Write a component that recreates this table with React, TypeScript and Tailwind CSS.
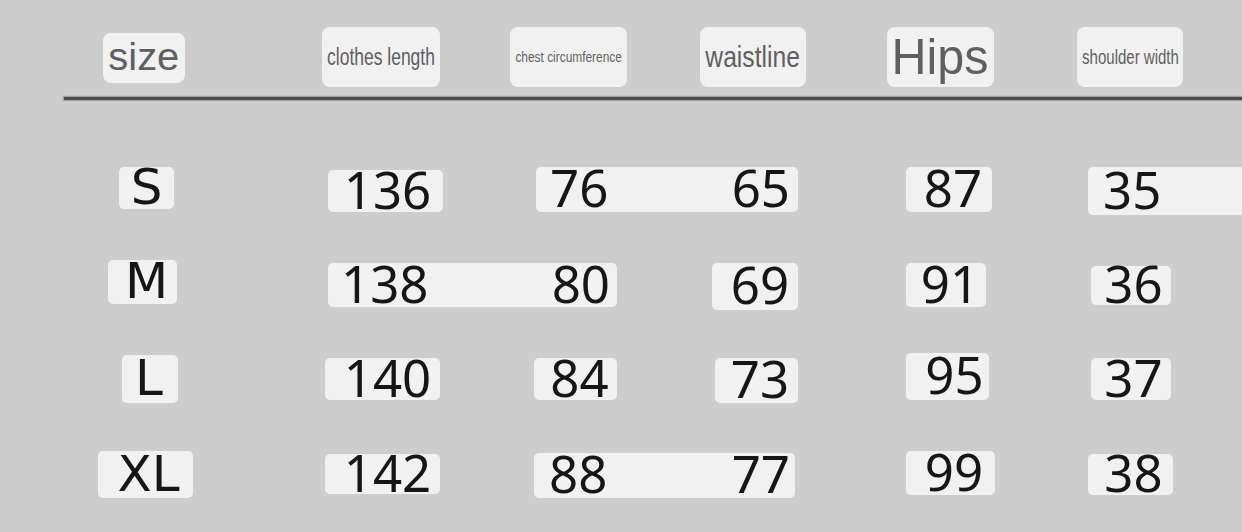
import clsx from "clsx";
import type { ReactNode } from "react";

type CellProps = {
  className?: string;
  children: ReactNode;
};

function Cell({ className, children }: CellProps) {
  return (
    <div
      className={clsx(
        "flex shrink-0 items-center rounded-[5px] bg-[#f1f1f1]",
        className,
      )}
    >
      {children}
    </div>
  );
}

function Num({ children }: { children: ReactNode }) {
  return (
    <span className="pb-[4px] font-['Noto_Sans',sans-serif] text-[51px] leading-none text-[#161616]">
      {children}
    </span>
  );
}

function Size({ children }: { children: ReactNode }) {
  return (
    <span className="pb-[2px] font-['DejaVu_Sans',sans-serif] text-[50px] leading-none text-[#161616]">
      {children}
    </span>
  );
}

const head =
  "flex h-[60px] shrink-0 items-center justify-center rounded-[8px] bg-[#f1f1f1]";
const headText =
  "whitespace-nowrap font-['Liberation_Sans',Arial,sans-serif] leading-none text-[#5f5f5f]";

export default function App() {
  return (
    <div className="flex h-[532px] w-[1242px] flex-col overflow-hidden bg-[#cdcdcd]">
      {/* column titles */}
      <div className="flex h-[97px] shrink-0 items-start pt-[27px]">
        <div className="ml-[103px] mt-[6px] flex h-[50px] w-[82px] shrink-0 items-center justify-center rounded-[8px] bg-[#f1f1f1]">
          <span className={clsx(headText, "scale-x-[1.05] pb-[2px] text-[38px]")}>size</span>
        </div>
        <div className={clsx(head, "ml-[137px] w-[118px]")}>
          <span className={clsx(headText, "scale-x-[0.76] text-[23px]")}>
            clothes length
          </span>
        </div>
        <div className={clsx(head, "ml-[70px] w-[117px]")}>
          <span className={clsx(headText, "scale-x-[0.85] text-[14px]")}>
            chest circumference
          </span>
        </div>
        <div className={clsx(head, "ml-[73px] w-[106px]")}>
          <span className={clsx(headText, "scale-x-[0.85] text-[29px]")}>
            waistline
          </span>
        </div>
        <div className={clsx(head, "ml-[81px] w-[107px]")}>
          <span className={clsx(headText, "scale-x-[0.97] text-[50px]")}>Hips</span>
        </div>
        <div className={clsx(head, "ml-[83px] w-[106px]")}>
          <span className={clsx(headText, "scale-x-[0.75] text-[20px]")}>
            shoulder width
          </span>
        </div>
      </div>

      <div className="ml-[64px] h-[3px] shrink-0 bg-[#4a4a4a] shadow-[0_0_1px_1px_rgba(80,80,80,0.35)]" />

      {/* S */}
      <div className="mt-[67px] flex h-[93px] shrink-0 items-start">
        <Cell className="ml-[119px] h-[42px] w-[55px] justify-center">
          <Size>S</Size>
        </Cell>
        <Cell className="ml-[154px] mt-[3px] h-[42px] w-[115px] justify-center pl-[4px]">
          <Num>136</Num>
        </Cell>
        <Cell className="ml-[93px] h-[45px] w-[262px] justify-between pl-[14px] pr-[8px]">
          <Num>76</Num>
          <Num>65</Num>
        </Cell>
        <Cell className="ml-[108px] h-[45px] w-[86px] justify-center pl-[8px]">
          <Num>87</Num>
        </Cell>
        <Cell className="ml-[96px] h-[48px] flex-1 rounded-r-none pl-[15px]">
          <Num>35</Num>
        </Cell>
      </div>

      {/* M */}
      <div className="flex h-[92px] shrink-0 items-start">
        <Cell className="ml-[108px] h-[44px] w-[69px] justify-center pl-[8px]">
          <Size>M</Size>
        </Cell>
        <Cell className="ml-[151px] mt-[3px] h-[44px] w-[289px] justify-between pl-[13px] pr-[7px]">
          <Num>138</Num>
          <Num>80</Num>
        </Cell>
        <Cell className="ml-[95px] mt-[3px] h-[47px] w-[86px] justify-center pl-[10px]">
          <Num>69</Num>
        </Cell>
        <Cell className="ml-[108px] mt-[3px] h-[44px] w-[80px] justify-center pl-[8px]">
          <Num>91</Num>
        </Cell>
        <Cell className="ml-[105px] mt-[6px] h-[39px] w-[80px] justify-center pl-[5px]">
          <Num>36</Num>
        </Cell>
      </div>

      {/* L */}
      <div className="flex h-[98px] shrink-0 items-start">
        <Cell className="ml-[122px] mt-[3px] h-[48px] w-[56px] justify-center pr-[2px]">
          <Size>L</Size>
        </Cell>
        <Cell className="ml-[147px] mt-[6px] h-[42px] w-[115px] justify-center pl-[10px]">
          <Num>140</Num>
        </Cell>
        <Cell className="ml-[94px] mt-[6px] h-[42px] w-[83px] justify-center pl-[8px]">
          <Num>84</Num>
        </Cell>
        <Cell className="ml-[98px] mt-[6px] h-[45px] w-[83px] justify-center pl-[7px]">
          <Num>73</Num>
        </Cell>
        <Cell className="ml-[108px] mt-[1px] h-[47px] w-[83px] justify-center pl-[14px]">
          <Num>95</Num>
        </Cell>
        <Cell className="ml-[102px] mt-[6px] h-[42px] w-[80px] justify-center pl-[5px]">
          <Num>37</Num>
        </Cell>
      </div>

      {/* XL */}
      <div className="flex h-[82px] shrink-0 items-start">
        <Cell className="ml-[98px] mt-[1px] h-[47px] w-[95px] justify-center pl-[6px]">
          <Size>XL</Size>
        </Cell>
        <Cell className="ml-[132px] mt-[4px] h-[40px] w-[115px] justify-center pl-[10px]">
          <Num>142</Num>
        </Cell>
        <Cell className="ml-[94px] mt-[3px] h-[45px] w-[261px] justify-between pl-[15px] pr-[5px]">
          <Num>88</Num>
          <Num>77</Num>
        </Cell>
        <Cell className="ml-[111px] mt-[1px] h-[44px] w-[89px] justify-center pl-[7px]">
          <Num>99</Num>
        </Cell>
        <Cell className="ml-[93px] mt-[4px] h-[41px] w-[85px] justify-center pl-[6px]">
          <Num>38</Num>
        </Cell>
      </div>
    </div>
  );
}
